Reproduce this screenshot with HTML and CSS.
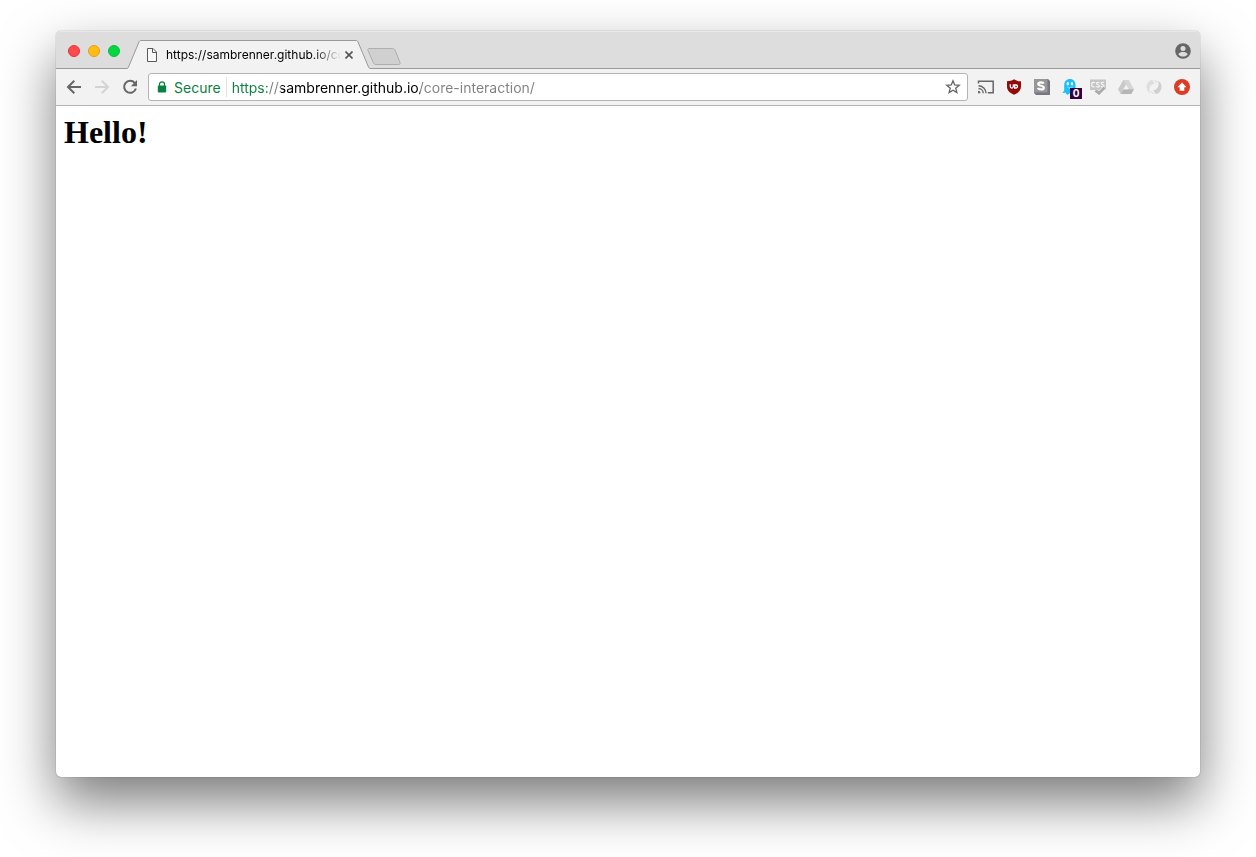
FILE: index.html
```html
<!DOCTYPE html>
<html lang="en">
<head>
<meta charset="utf-8">
<meta name="viewport" content="width=device-width, initial-scale=1">
<title>https://sambrenner.github.io/core-interaction/</title>
<link rel="stylesheet" href="styles.css">
</head>
<body>
<div class="window">
  <header class="tabstrip">
    <div class="lights">
      <button class="light light-close" aria-label="Close window"></button>
      <button class="light light-min" aria-label="Minimize window"></button>
      <button class="light light-max" aria-label="Zoom window"></button>
    </div>
    <div class="tab">
      <svg class="tab-edge" viewBox="0 0 14 29" aria-hidden="true"><path d="M0 29V28.500L1.500 27 12 2C12.500.900 13 .500 14 .500V29Z" fill="#f2f2f2"/><path d="M0 28.500C.700 28.500 1 28 1.500 27L12 2C12.500.900 13 .500 14 .500" fill="none" stroke="#999"/></svg>
      <div class="tab-body">
        <svg class="page-icon" viewBox="0 0 12 14" aria-hidden="true"><path d="M1.500.500H7L10.500 4V13.500H1.500Z" fill="#f8f8f8" stroke="#5a5a5a"/><path d="M6.500.500V4.500H10.500" fill="none" stroke="#5a5a5a"/></svg>
        <span class="tab-title">https://sambrenner.github.io/core-interaction/</span>
        <button class="tab-close" aria-label="Close tab"><svg width="8" height="8" viewBox="0 0 8 8"><path d="M.500.500 7.500 7.500M7.500.500.500 7.500" stroke="#555" stroke-width="1.600"/></svg></button>
      </div>
      <svg class="tab-edge" viewBox="0 0 14 29" aria-hidden="true"><path d="M14 29V28.500L12.500 27 2 2C1.500.900 1 .500 0 .500V29Z" fill="#f2f2f2"/><path d="M14 28.500C13.300 28.500 13 28 12.500 27L2 2C1.500.900 1 .500 0 .500" fill="none" stroke="#999"/></svg>
    </div>
    <button class="new-tab" aria-label="New tab"><svg width="34" height="17" viewBox="0 0 34 17"><path d="M2 .500H25.500C27 .500 27.700 1.200 28.200 2.300L33 14.500C33.400 15.800 33 16.500 31.800 16.500H9C7.500 16.500 6.800 15.800 6.300 14.700L1 2.500C.500 1.200 1 .500 2 .500Z" fill="#d0d0d0" stroke="#aeaeae"/></svg></button>
    <button class="profile" aria-label="Profile"><svg width="16" height="16" viewBox="0 0 16 16"><circle cx="8" cy="8" r="7.800" fill="#666"/><circle cx="8" cy="5.400" r="2.500" fill="#ddd"/><path d="M3.300 11.200C4 9.600 6.100 9 8 9S12 9.600 12.700 11.200C11.700 12.700 10 13.600 8 13.600S4.300 12.700 3.300 11.200Z" fill="#ddd"/></svg></button>
  </header>

  <nav class="toolbar" aria-label="Browser toolbar">
    <div class="tools">
      <button class="tool" aria-label="Back"><svg width="16" height="16" viewBox="0 0 16 16"><path d="M15 8H2.500M8.300 1.700 2 8l6.300 6.300" fill="none" stroke="#666" stroke-width="2"/></svg></button>
      <button class="tool" aria-label="Forward"><svg width="16" height="16" viewBox="0 0 16 16"><path d="M1 8H13.500M7.700 1.700 14 8l-6.300 6.300" fill="none" stroke="#d3d3d3" stroke-width="2"/></svg></button>
      <button class="tool" aria-label="Reload"><svg width="16" height="16" viewBox="0 0 16 16"><path d="M12.700 3.900A6 6 0 1 0 13.900 9.500" fill="none" stroke="#666" stroke-width="2"/><path d="M15 1V7.200H8.800Z" fill="#666"/></svg></button>
    </div>
    <div class="omnibox">
      <button class="secure"><svg width="10" height="12" viewBox="0 0 10 12" aria-hidden="true"><path d="M2.500 5V3.300a2.500 2.500 0 0 1 5 0V5" fill="none" stroke="#0b8043" stroke-width="1.300"/><rect x=".800" y="4.500" width="8.400" height="7" rx="1" fill="#0b8043"/></svg>Secure</button>
      <input class="address" type="text" aria-label="Address" value="https://sambrenner.github.io/core-interaction/" spellcheck="false">
      <button class="star" aria-label="Bookmark"><svg width="16" height="16" viewBox="0 0 16 16"><path d="M8 1.800 9.700 6 14.200 6.300 10.700 9.200 11.900 13.600 8 11.200 4.100 13.600 5.300 9.200 1.800 6.300 6.300 6Z" fill="none" stroke="#666" stroke-width="1.300"/></svg></button>
    </div>
    <div class="tools">
      <button class="tool" aria-label="Cast"><svg width="18" height="16" viewBox="0 0 18 16"><path d="M1.500 4.500V2.200H16.200V13.800H10.800" fill="none" stroke="#666" stroke-width="1.500"/><path d="M1.500 6.700A7.500 7.500 0 0 1 9 14.200M1.500 9.500A4.700 4.700 0 0 1 6.200 14.200" fill="none" stroke="#666" stroke-width="1.400"/><path d="M1 11.800A2.500 2.500 0 0 1 3.500 14.300H1Z" fill="#666"/></svg></button>
      <button class="tool" aria-label="uBlock"><svg width="16" height="16" viewBox="0 0 16 16"><path d="M8 .300C10 1.800 12.500 2.200 15 2.200V7.500C15 11.500 12 14 8 15.800C4 14 1 11.500 1 7.500V2.200C3.500 2.200 6 1.800 8 .300Z" fill="#920a0a"/><path d="M4.300 5.300V7.600a1.500 1.500 0 0 0 3 0V5.300" fill="none" stroke="#fff" stroke-width="1.300"/><path d="M8.700 6H10a1.500 1.500 0 0 1 0 3H8.700Z" fill="none" stroke="#fff" stroke-width="1.300"/></svg></button>
      <button class="tool" aria-label="Stylish"><svg width="16" height="16" viewBox="0 0 16 16"><path d="M0 0H14L16 2V16H2L0 14Z" fill="#777783"/><path d="M0 0H13.500V13.500H0Z" fill="#979797"/><path d="M9.800 4.600C9 3 4.300 2.700 4.300 5S9.800 6.300 9.800 8.700 4.800 10.900 3.700 9" fill="none" stroke="#fff" stroke-width="2.200"/></svg></button>
      <button class="tool tool-badged" aria-label="Ghostery, 0 blocked"><svg width="16" height="16" viewBox="0 0 16 16"><path d="M8 0C4.500 0 2.200 2.500 2.200 6V10.500C2.200 12 1.500 12.700.500 13.200 1.500 14.500 2.700 14.200 3.500 13.300 3.800 15 4.600 15.700 5.600 15.700S7.300 14.500 8 14 9.800 15.600 11 15.500 13 14 13.500 12.500V6C13.500 2.500 11.500 0 8 0Z" fill="#19c3fa"/><ellipse cx="5.800" cy="4.800" rx="1.200" ry="1.700" fill="#fff"/><ellipse cx="10" cy="4.800" rx="1.200" ry="1.700" fill="#fff"/><path d="M5.500 8.300C6.500 9.300 9.500 9.300 10.500 8.300" fill="none" stroke="#c8f2ff" stroke-width=".800"/></svg><span class="badge">0</span></button>
      <button class="tool" aria-label="CSS checker"><svg width="16" height="16" viewBox="0 0 16 16"><path d="M0 .500H16V11H0Z" fill="#c5c5c5"/><path d="M4.800 4C4.500 3 1.800 3 1.800 4.500V6.800C1.800 8.300 4.500 8.300 4.800 7.300M9.300 3.800C9 3 6.500 3 6.500 4.300S9.300 5.500 9.300 7 6.700 8.200 6.300 7.300M14 3.800C13.700 3 11.200 3 11.200 4.300S14 5.500 14 7 11.400 8.200 11 7.300" fill="none" stroke="#f8f8f8" stroke-width="1.200"/><path d="M5.500 11.300 9 14.200 14.500 8.500" fill="none" stroke="#f2f2f2" stroke-width="4"/><path d="M5.500 11.300 9 14.200 14.500 8.500" fill="none" stroke="#ababab" stroke-width="2.800"/></svg></button>
      <button class="tool" aria-label="Drive"><svg width="16" height="16" viewBox="0 0 16 16"><path d="M5.300 1H10.700L8 5.800 2.700 15 0 10.300Z" fill="#c9c9c9"/><path d="M5.300 1H10.700L16 10.300H10.600Z" fill="#d5d5d5"/><path d="M5.500 10.300H16L13.300 15H2.700Z" fill="#b5b5b5"/><path d="M8 6 10.500 10.300H5.500Z" fill="#f2f2f2"/></svg></button>
      <button class="tool" aria-label="Sync"><svg width="16" height="16" viewBox="0 0 16 16"><path d="M6.500.800A7.300 7.300 0 0 0 4 14.200C2.300 9.500 4 5.500 9 4.500 7.800 3.500 6.800 2.500 6.500.800Z" fill="#dedede"/><path d="M9.500 15.200A7.300 7.300 0 0 0 12 1.800C13.700 6.500 12 10.500 7 11.500 8.200 12.500 9.200 13.500 9.500 15.200Z" fill="#cfcfcf"/><path d="M8.500.800C9 2.300 10 3 11.500 3.300M7.500 15.200C7 13.700 6 13 4.500 12.700" fill="none" stroke="#d5d5d5"/></svg></button>
      <button class="tool" aria-label="Update available"><svg width="16" height="16" viewBox="0 0 16 16"><circle cx="8" cy="8" r="8" fill="#dc3c23"/><path d="M8 3.500 12.500 8.200H10.300V11.800H5.700V8.200H3.500Z" fill="#fff"/></svg></button>
    </div>
  </nav>

  <main class="page">
    <h1 class="greeting">Hello!</h1>
  </main>
</div>
</body>
</html>
```

FILE: styles.css
```css
* {
  box-sizing: border-box;
}

body {
  margin: 0;
  min-height: 100vh;
  padding: 31px 56px 80px;
  display: flex;
  background: #fff;
  font-family: Inter, Roboto, "Liberation Sans", sans-serif;
}

button {
  padding: 0;
  border: 0;
  background: none;
  font: inherit;
  color: inherit;
}

svg {
  display: block;
  flex: none;
}

.window {
  flex: 1;
  min-width: 0;
  display: flex;
  flex-direction: column;
  background: #fff;
  border-radius: 5px;
  box-shadow: 0 0 1px rgba(0, 0, 0, 0.6), 0 25px 54px rgba(0, 0, 0, 0.52);
}

/* Tab strip */
.tabstrip {
  display: flex;
  align-items: flex-end;
  height: 38px;
  padding: 0 9px 0 12px;
  background: linear-gradient(#999, #999) bottom / 100% 1px no-repeat, #ddd;
  border-radius: 5px 5px 0 0;
  box-shadow: inset 0 1px #e8e8e8;
}

.lights {
  display: flex;
  align-self: center;
  gap: 8px;
  padding: 2px 7px 0 0;
}

.light {
  width: 12px;
  height: 12px;
  border: 1px solid;
  border-radius: 50%;
}

.light-close {
  background: #ff4a4c;
  border-color: #e5333b;
}

.light-min {
  background: #ffbd14;
  border-color: #e3a10f;
}

.light-max {
  background: #00d742;
  border-color: #0fbd35;
}

.tab {
  display: flex;
  flex: 0 1 243px;
  min-width: 0;
}

.tab-edge {
  width: 14px;
  height: 29px;
}

.tab-body {
  display: flex;
  flex: 1;
  min-width: 0;
  align-items: center;
  padding: 0 3px 0 5px;
  background: #f2f2f2;
  border-top: 1px solid #999;
}

.page-icon {
  width: 12px;
  height: 14px;
}

.tab-title {
  flex: 1;
  min-width: 0;
  margin-left: 8px;
  overflow: hidden;
  white-space: nowrap;
  font-size: 12px;
  line-height: 16px;
  color: #000;
  mask-image: linear-gradient(to left, transparent, #000 28px);
}

.tab-close {
  margin-left: 4px;
}

.new-tab {
  margin: 0 auto 4px -3px;
}

.profile {
  align-self: center;
  padding-top: 2px;
}

/* Toolbar */
.toolbar {
  display: flex;
  align-items: center;
  gap: 4px;
  height: 37px;
  padding: 0 4px;
  background: #f2f2f2;
  border-bottom: 1px solid #b4b4b4;
}

.tools {
  display: flex;
}

.tool {
  display: flex;
  align-items: center;
  justify-content: center;
  width: 28px;
  height: 28px;
}

.tool-badged {
  position: relative;
}

.badge {
  position: absolute;
  right: 2px;
  bottom: 2px;
  width: 12px;
  height: 11px;
  background: #36003f;
  color: #fff;
  font-size: 10px;
  font-weight: 700;
  line-height: 11px;
  text-align: center;
}

.omnibox {
  display: flex;
  flex: 1;
  min-width: 0;
  align-items: center;
  height: 28px;
  padding: 0 6px 0 8px;
  background: #fff;
  border: 1px solid #b4b4b4;
  border-radius: 3px;
  font-size: 14px;
}

.secure {
  display: flex;
  align-items: center;
  gap: 7px;
  height: 20px;
  padding-right: 5px;
  border-right: 1px solid #e2e2e2;
  color: #0b8043;
}

/* The scheme, host and path each take a colour from the clipped gradient. */
.address {
  flex: 1;
  min-width: 0;
  height: 20px;
  margin-left: 5px;
  padding: 0;
  border: 0;
  outline: 0;
  background: linear-gradient(to right, #0b8043 36px, #808080 36px 49px, #000 49px 188px, #808080 188px);
  background-clip: text;
  -webkit-text-fill-color: transparent;
  font: inherit;
}

/* Page */
.page {
  flex: 1;
  padding: 8px;
}

.greeting {
  margin: 0;
  font-family: "Liberation Serif", serif;
  font-size: 32px;
  line-height: 36px;
  font-weight: 700;
  color: #000;
}
```
